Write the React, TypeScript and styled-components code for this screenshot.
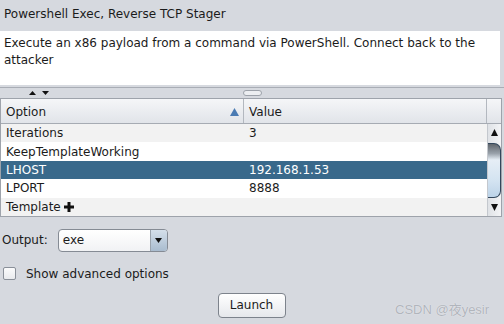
import React from 'react';
import styled, { createGlobalStyle } from 'styled-components';

const Global = createGlobalStyle`
  html, body { margin: 0; padding: 0; background: #d6d9df; }
  body { font-family: "DejaVu Sans", "Noto Sans", sans-serif; font-size: 12px; color: #1b1b1b; }
`;

const Window = styled.div`
  position: relative;
  width: 504px;
  height: 324px;
  overflow: hidden;
  background: #d6d9df;
  display: flex;
  flex-direction: column;
`;

const Title = styled.div`
  height: 31px;
  box-sizing: border-box;
  padding: 6px 0 0 4px;
  line-height: 17px;
  white-space: nowrap;
`;

const Description = styled.div`
  width: 500px;
  height: 54px;
  box-sizing: border-box;
  background: #ffffff;
  padding: 4px 4px 0 4px;
  line-height: 17px;
`;

const Splitter = styled.div`
  height: 13px;
  box-sizing: border-box;
  padding-top: 2px;
`;

const SplitInner = styled.div`
  height: 11px;
  box-sizing: border-box;
  border-top: 1px solid #a9adb5;
  display: flex;
  align-items: center;
`;

const Arrows = styled.div`
  display: flex;
  gap: 6px;
  margin-left: 29px;
`;

const Grip = styled.div`
  width: 17px;
  height: 4px;
  margin-left: 194px;
  border: 1px solid #9da2aa;
  border-radius: 3px;
  background: #eceef1;
`;

const Table = styled.div`
  width: 502px;
  box-sizing: border-box;
  border: 1px solid #9ea3ab;
  background: #ffffff;
`;

const Header = styled.div`
  display: grid;
  grid-template-columns: 243px 243px 14px;
  height: 25px;
  box-sizing: border-box;
  background: linear-gradient(#f5f6f8, #e1e4e9);
  border-bottom: 1px solid #a6abb3;
`;

const HeadCell = styled.div<{ $last?: boolean }>`
  display: flex;
  align-items: center;
  justify-content: space-between;
  padding: 1px 4px 0 5px;
  border-right: ${p => (p.$last ? 'none' : '1px solid #b3b8bf')};
  box-sizing: border-box;
`;

const Body = styled.div`
  display: flex;
`;

const Rows = styled.div`
  width: 486px;
  display: flex;
  flex-direction: column;
`;

const Row = styled.div<{ $bg: string; $sel?: boolean }>`
  display: grid;
  grid-template-columns: 243px 243px;
  height: 18.4px;
  align-items: center;
  background: ${p => p.$bg};
  color: ${p => (p.$sel ? '#ffffff' : '#1b1b1b')};
`;

const Cell = styled.div`
  padding-left: 5px;
  display: flex;
  align-items: center;
  gap: 3px;
  white-space: nowrap;
`;

const Scrollbar = styled.div`
  width: 14px;
  display: flex;
  flex-direction: column;
  background: linear-gradient(to right, #dfe2e6, #f3f4f6);
  border-left: 1px solid #c4c8ce;
  box-sizing: border-box;
`;

const ScrollBtn = styled.div<{ $h: number }>`
  height: ${p => p.$h}px;
  display: flex;
  align-items: center;
  justify-content: center;
`;

const Track = styled.div`
  flex: 1;
  display: flex;
  flex-direction: column;
  padding-top: 2px;
`;

const Thumb = styled.div`
  height: 55px;
  box-sizing: border-box;
  border: 1px solid #33475c;
  border-left: none;
  border-radius: 0 7px 7px 0;
  background: linear-gradient(
    to bottom,
    #5f656c 0%,
    #9aa2ab 18%,
    #e6eef6 30%,
    #d3e3f1 70%,
    #bcd3e8 100%
  );
`;

const Form = styled.div`
  display: flex;
  flex-direction: column;
  padding-top: 12px;
`;

const OutputRow = styled.div`
  display: flex;
  align-items: center;
  height: 23px;
  padding-left: 2px;
  gap: 10px;
`;

const Combo = styled.div`
  width: 110px;
  height: 23px;
  box-sizing: border-box;
  border: 1px solid #858b94;
  border-radius: 4px;
  background: linear-gradient(#ffffff, #f1f2f4);
  display: flex;
  overflow: hidden;
`;

const ComboText = styled.div`
  flex: 1;
  padding-left: 4px;
  display: flex;
  align-items: center;
`;

const ComboArrow = styled.div`
  width: 16px;
  border-left: 1px solid #9aa3ad;
  background: linear-gradient(#d4dfea, #a9bccf);
  display: flex;
  align-items: center;
  justify-content: center;
`;

const CheckRow = styled.div`
  display: flex;
  align-items: center;
  height: 14px;
  margin-top: 15px;
  padding-left: 3px;
  gap: 10px;
`;

const Box = styled.div`
  width: 13px;
  height: 13px;
  box-sizing: border-box;
  border: 1px solid #8a9099;
  border-radius: 2px;
  background: linear-gradient(#fbfbfc, #e9ebee);
`;

const ButtonRow = styled.div`
  display: flex;
  justify-content: center;
  margin-top: 12px;
  padding-right: 1px;
`;

const Button = styled.div`
  width: 68px;
  height: 25px;
  box-sizing: border-box;
  border: 1px solid #7d838c;
  border-radius: 4px;
  background: linear-gradient(#ffffff, #e6e8ec);
  display: flex;
  align-items: center;
  justify-content: center;
`;

const Watermark = styled.div`
  position: absolute;
  left: 395px;
  top: 299px;
  font-family: "Liberation Sans", "Noto Sans CJK SC", sans-serif;
  font-size: 13px;
  color: #b1b5bc;
  text-shadow: 0 0 1px #f4f5f7;
  white-space: nowrap;
`;

const Tri = ({ up, color = '#111', w = 7, h = 4 }: { up?: boolean; color?: string; w?: number; h?: number }) => (
  <svg width={w} height={h} viewBox={`0 0 ${w} ${h}`}>
    <polygon points={up ? `0,${h} ${w / 2},0 ${w},${h}` : `0,0 ${w},0 ${w / 2},${h}`} fill={color} />
  </svg>
);

const Plus = () => (
  <svg width="10" height="10" viewBox="0 0 10 10">
    <rect x="3.5" y="0" width="3" height="10" fill="#111" />
    <rect x="0" y="3.5" width="10" height="3" fill="#111" />
  </svg>
);

const rows = [
  { k: 'Iterations', v: '3', bg: '#f2f2f2' },
  { k: 'KeepTemplateWorking', v: '', bg: '#ffffff' },
  { k: 'LHOST', v: '192.168.1.53', bg: '#39698b', sel: true },
  { k: 'LPORT', v: '8888', bg: '#ffffff' },
  { k: 'Template', v: '', bg: '#f2f2f2', plus: true },
];

export default function App() {
  return (
    <Window>
      <Global />
      <Title>Powershell Exec, Reverse TCP Stager</Title>
      <Description>
        Execute an x86 payload from a command via PowerShell. Connect back to the attacker
      </Description>
      <Splitter>
        <SplitInner>
          <Arrows>
            <Tri up w={7} h={4} />
            <Tri w={7} h={4} />
          </Arrows>
          <Grip />
        </SplitInner>
      </Splitter>
      <Table>
        <Header>
          <HeadCell>
            <span>Option</span>
            <Tri up color="#4a7bb3" w={9} h={8} />
          </HeadCell>
          <HeadCell>
            <span>Value</span>
          </HeadCell>
          <HeadCell $last />
        </Header>
        <Body>
          <Rows>
            {rows.map(r => (
              <Row key={r.k} $bg={r.bg} $sel={r.sel}>
                <Cell>
                  {r.k}
                  {r.plus && <Plus />}
                </Cell>
                <Cell>{r.v}</Cell>
              </Row>
            ))}
          </Rows>
          <Scrollbar>
            <ScrollBtn $h={17}>
              <Tri up w={7} h={7} />
            </ScrollBtn>
            <Track>
              <Thumb />
            </Track>
            <ScrollBtn $h={16}>
              <Tri w={7} h={7} />
            </ScrollBtn>
          </Scrollbar>
        </Body>
      </Table>
      <Form>
        <OutputRow>
          <span>Output:</span>
          <Combo>
            <ComboText>exe</ComboText>
            <ComboArrow>
              <Tri w={7} h={5} />
            </ComboArrow>
          </Combo>
        </OutputRow>
        <CheckRow>
          <Box />
          <span>Show advanced options</span>
        </CheckRow>
        <ButtonRow>
          <Button>Launch</Button>
        </ButtonRow>
      </Form>
      <Watermark>CSDN @夜yesir</Watermark>
    </Window>
  );
}
